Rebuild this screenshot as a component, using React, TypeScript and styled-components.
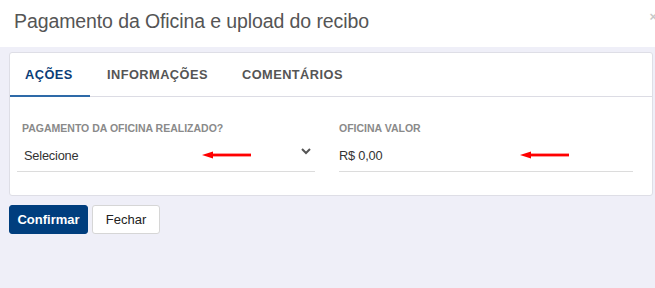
import styled, { createGlobalStyle } from 'styled-components'

const Global = createGlobalStyle`
  html, body {
    margin: 0;
    padding: 0;
    background: #efeff8;
    font-family: 'Liberation Sans', Arial, sans-serif;
  }
`

const Page = styled.div`
  width: 655px;
  height: 288px;
  overflow: hidden;
  background: #efeff8;
`

const Header = styled.div`
  position: relative;
  height: 47px;
  background: #fff;
  box-sizing: border-box;
  padding: 10px 14px 0;
`

const Title = styled.h4`
  margin: 0;
  font-size: 19.5px;
  font-weight: 400;
  color: #555;
  letter-spacing: -0.1px;
`

const Close = styled.span`
  position: absolute;
  right: -2px;
  top: 9px;
  font-size: 13px;
  color: #c8c8c8;
  font-weight: 700;
`

const Body = styled.div`
  padding: 5px 2px 0 9px;
`

const Card = styled.div`
  background: #fff;
  border: 1px solid #dedee6;
  border-radius: 3px;
  box-sizing: border-box;
  height: 144px;
`

const Tabs = styled.div`
  display: flex;
  height: 44px;
  border-bottom: 1px solid #dcdce4;
  box-sizing: border-box;
`

const Tab = styled.div<{ $active?: boolean }>`
  display: flex;
  align-items: center;
  padding: 0 17px;
  font-size: 12.8px;
  font-weight: 700;
  letter-spacing: 0.45px;
  color: ${p => (p.$active ? '#0b3d78' : '#555')};
  border-bottom: 2px solid ${p => (p.$active ? '#2e6aa8' : 'transparent')};
  margin-bottom: -1px;
  width: ${p => (p.$active ? '80px' : 'auto')};
  box-sizing: border-box;
  &:first-child {
    padding-left: 15px;
  }
`

const Fields = styled.div`
  display: grid;
  grid-template-columns: 298px 294px;
  column-gap: 24px;
  padding: 25px 0 0 7px;
`

const Field = styled.div`
  display: flex;
  flex-direction: column;
`

const Label = styled.div<{ $flush?: boolean }>`
  font-size: 10.5px;
  font-weight: 700;
  color: #8a8a8a;
  padding-left: ${p => (p.$flush ? 0 : 5)}px;
  height: 14px;
`

const InputRow = styled.div<{ $flush?: boolean }>`
  position: relative;
  display: flex;
  align-items: center;
  height: 32px;
  margin-top: 3px;
  border-bottom: 1px solid #dcdcdc;
  padding-left: ${p => (p.$flush ? 0 : 7)}px;
  font-size: 12.8px;
  letter-spacing: -0.2px;
  color: #333;
`

const Chevron = styled.svg`
  position: absolute;
  right: 4px;
  top: 9px;
`

const Arrow = styled.svg<{ $left: number }>`
  position: absolute;
  left: ${p => p.$left}px;
  top: 12px;
`

const Actions = styled.div`
  display: flex;
  gap: 4px;
  margin-top: 9px;
`

const Button = styled.button<{ $primary?: boolean }>`
  height: 29px;
  padding: 0;
  border-radius: 3px;
  font-family: 'Liberation Sans', Arial, sans-serif;
  font-size: 13px;
  font-weight: ${p => (p.$primary ? 700 : 400)};
  color: ${p => (p.$primary ? '#fff' : '#222')};
  background: ${p => (p.$primary ? '#003e7e' : '#fff')};
  border: 1px solid ${p => (p.$primary ? '#003e7e' : '#d6d6d6')};
  width: ${p => (p.$primary ? '79px' : '68px')};
`

const RedArrow = ({ left }: { left: number }) => (
  <Arrow $left={left} width="50" height="8" viewBox="0 0 50 8">
    <polygon points="0,4 11,0.5 11,7.5" fill="#f00" />
    <rect x="9" y="2.6" width="40" height="2.8" fill="#f00" />
  </Arrow>
)

export default function App() {
  return (
    <Page>
      <Global />
      <Header>
        <Title>Pagamento da Oficina e upload do recibo</Title>
        <Close>×</Close>
      </Header>
      <Body>
        <Card>
          <Tabs>
            <Tab $active>AÇÕES</Tab>
            <Tab>INFORMAÇÕES</Tab>
            <Tab>COMENTÁRIOS</Tab>
          </Tabs>
          <Fields>
            <Field>
              <Label>PAGAMENTO DA OFICINA REALIZADO?</Label>
              <InputRow>
                Selecione
                <RedArrow left={185} />
                <Chevron width="10" height="7" viewBox="0 0 10 7">
                  <polyline points="1,1 5,5 9,1" fill="none" stroke="#555" strokeWidth="2" />
                </Chevron>
              </InputRow>
            </Field>
            <Field>
              <Label $flush>OFICINA VALOR</Label>
              <InputRow $flush>
                R$ 0,00
                <RedArrow left={181} />
              </InputRow>
            </Field>
          </Fields>
        </Card>
        <Actions>
          <Button $primary>Confirmar</Button>
          <Button>Fechar</Button>
        </Actions>
      </Body>
    </Page>
  )
}
